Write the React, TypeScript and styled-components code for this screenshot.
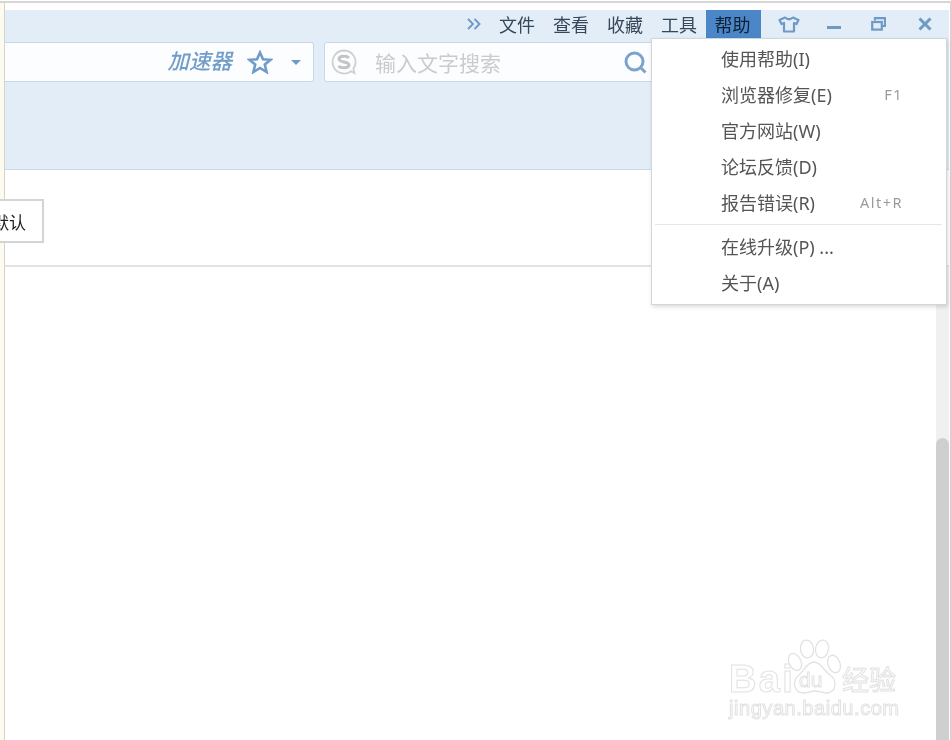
import React from "react";
import styled, { createGlobalStyle } from "styled-components";

const Global = createGlobalStyle`
  html, body { margin: 0; padding: 0; background: #fff; }
  * { box-sizing: border-box; }
  #root { width: 951px; height: 740px; overflow: hidden; }
`;

const FONT = `"Noto Sans", "Noto Sans CJK SC", sans-serif`;

const Page = styled.div`
  position: relative;
  width: 951px;
  height: 740px;
  padding-top: 1px;
  display: flex;
  flex-direction: column;
  background: #fff;
  font-family: ${FONT};
  overflow: hidden;
  filter: blur(0.5px);
`;
const TopLine = styled.div`
  height: 2px;
  flex: none;
  background: #d6d6d4;
`;
const Frame = styled.div`
  flex: 1;
  min-height: 0;
  display: flex;
`;
const LeftEdge = styled.div`
  width: 5px;
  flex: none;
  background: #fdfbf0;
  border-right: 1px solid #d4d4cc;
`;
const Window = styled.div`
  flex: 1;
  min-width: 0;
  padding-top: 7px;
  border-right: 1px solid #d4d4d4;
  padding-right: 1px;
  display: flex;
  flex-direction: column;
`;
const Header = styled.header`
  flex: none;
  height: 160px;
  background: #e3edf7;
  border-bottom: 1px solid #c9daeb;
  display: flex;
  flex-direction: column;
`;
const MenuBar = styled.nav`
  height: 28px;
  display: flex;
  justify-content: flex-end;
  align-items: stretch;
  padding-right: 17px;
`;
const MenuItem = styled.span<{ $active?: boolean }>`
  font-size: 18px;
  line-height: 30px;
  color: ${(p) => (p.$active ? "#0f2032" : "#37475a")};
  background: ${(p) => (p.$active ? "#4a86c8" : "transparent")};
  width: ${(p) => (p.$active ? "55px" : "36px")};
  margin-left: ${(p) => (p.$active ? "9px" : "18px")};
  padding-right: ${(p) => (p.$active ? "2px" : "0")};
  text-align: center;
  white-space: nowrap;
`;
const BarIcon = styled.span<{ $w: number; $ml: number }>`
  width: ${(p) => p.$w}px;
  margin-left: ${(p) => p.$ml}px;
  display: flex;
  align-items: center;
  justify-content: center;
  svg { display: block; }
`;
const ToolRow = styled.div`
  margin-top: 4px;
  height: 40px;
  display: flex;
  gap: 10px;
`;
const AddressBox = styled.div`
  width: 309px;
  border: 1px solid #c6d8ea;
  border-left: none;
  border-radius: 0 3px 3px 0;
  background: #fcfdff;
  display: flex;
  align-items: center;
  justify-content: flex-end;
  padding-right: 12px;
`;
const Speed = styled.span`
  font-size: 21.5px;
  line-height: 28px;
  margin-bottom: 2px;
  font-weight: 500;
  font-style: italic;
  color: #719dca;
  margin-right: 15px;
`;
const Caret = styled.span`
  width: 0;
  height: 0;
  border-left: 5px solid transparent;
  border-right: 5px solid transparent;
  border-top: 5px solid #6f9bc8;
  margin-left: 18px;
`;
const SearchBox = styled.div`
  width: 340px;
  border: 1px solid #c6d8ea;
  border-radius: 3px;
  background: #fcfdff;
  display: flex;
  align-items: center;
  padding-left: 6px;
`;
const Placeholder = styled.span`
  font-size: 21px;
  color: #cbcbcb;
  margin-left: 18px;
  flex: 1;
`;
const SearchIcon = styled.svg`
  margin-right: 16px;
`;
const Notice = styled.section`
  flex: none;
  height: 97px;
  border-bottom: 2px solid #e3e3e3;
  display: flex;
  align-items: flex-start;
  padding-top: 29px;
`;
const ConfirmButton = styled.button`
  flex: none;
  width: 70px;
  height: 44px;
  margin-left: -31px;
  padding: 0;
  background: #fff;
  border: 2px solid #d4d4d4;
  font-family: ${FONT};
  font-size: 17px;
  color: #222;
`;
const Content = styled.main`
  flex: 1;
  min-height: 0;
  display: flex;
  justify-content: flex-end;
`;
const Scrollbar = styled.div`
  width: 13px;
  background: #f0f0f0;
  display: flex;
  flex-direction: column;
  justify-content: flex-end;
`;
const Thumb = styled.div`
  height: 302px;
  background: #cfcfcf;
  border-radius: 7px 7px 0 0;
`;
const Dropdown = styled.div`
  position: absolute;
  left: 651px;
  top: 38px;
  width: 296px;
  height: 267px;
  background: #fff;
  border: 1px solid #cfd6dc;
  box-shadow: 1px 2px 4px rgba(0, 0, 0, 0.14);
  padding: 1px 2px 0;
`;
const Row = styled.div`
  height: 36px;
  display: flex;
  align-items: center;
  justify-content: space-between;
  padding: 0 41px 0 67px;
`;
const RowLabel = styled.span`
  font-size: 18px;
  color: #555;
  white-space: nowrap;
`;
const Shortcut = styled.span`
  font-size: 14.5px;
  letter-spacing: 1.5px;
  color: #9a9a9a;
`;
const Separator = styled.div`
  height: 1px;
  margin: 4px 2px 3px 1px;
  background: #e6e6e6;
`;
const Watermark = styled.div`
  position: absolute;
  left: 729px;
  top: 638px;
  width: 172px;
  display: flex;
  flex-direction: column;
  pointer-events: none;
`;
const WmTop = styled.div`
  display: flex;
  align-items: flex-end;
  height: 58px;
`;
const Outline = styled.span<{ $size: number }>`
  font-family: "Liberation Sans", sans-serif;
  font-size: ${(p) => p.$size}px;
  line-height: 1;
  color: #fff;
  -webkit-text-stroke: 1px #e2e2e2;
  white-space: nowrap;
`;
const Bai = styled(Outline)`
  font-weight: 700;
  letter-spacing: 2.3px;
  margin-bottom: -2px;
`;
const PawBox = styled.span`
  position: relative;
  width: 54px;
  height: 58px;
  margin-left: -8px;
  flex: none;
  svg { display: block; }
`;
const Du = styled(Outline)`
  position: absolute;
  left: 12px;
  top: 31px;
`;
const Jing = styled(Outline)`
  font-family: "Noto Sans CJK SC", sans-serif;
  margin: 0 0 4px 1px;
`;
const WmUrl = styled(Outline)`
  margin-top: 2px;
  letter-spacing: 0.55px;
`;

const Shirt = () => (
  <svg width="22" height="17" viewBox="0 0 22 17" fill="none" stroke="#6f9ac6" strokeWidth="2.2" strokeLinejoin="round">
    <path d="M7 1.5 L1.5 4 L3.5 8 L6 7 V15.5 H16 V7 L18.5 8 L20.5 4 L15 1.5 Q11 5 7 1.5 Z" />
  </svg>
);
const Minimize = () => (
  <svg width="14" height="14" viewBox="0 0 14 14"><rect x="0" y="9" width="14" height="3" fill="#6f9ac6" /></svg>
);
const Restore = () => (
  <svg width="15" height="14" viewBox="0 0 15 14" fill="none" stroke="#6f9ac6" strokeWidth="2.2">
    <path d="M4 3.5 V1.2 H14 V9 H11" />
    <rect x="1.2" y="5" width="9.6" height="7.6" />
  </svg>
);
const Close = () => (
  <svg width="14" height="14" viewBox="0 0 14 14" fill="none" stroke="#6f9ac6" strokeWidth="3">
    <path d="M1.5 1.5 L12.5 12.5 M12.5 1.5 L1.5 12.5" />
  </svg>
);
const Chevrons = () => (
  <svg width="14" height="12" viewBox="0 0 14 12" fill="none" stroke="#6f9ac6" strokeWidth="1.9">
    <path d="M1 1 L6 6 L1 11 M7.5 1 L12.5 6 L7.5 11" />
  </svg>
);
const Star = () => (
  <svg width="26" height="24" viewBox="0 0 26 24" fill="none" stroke="#6f9bc8" strokeWidth="2.6" strokeLinejoin="miter">
    <path d="M13 2.5 L16 9.2 L23.5 9.8 L17.8 14.6 L19.6 22 L13 18 L6.4 22 L8.2 14.6 L2.5 9.8 L10 9.2 Z" />
  </svg>
);
const SogouLogo = () => (
  <svg width="26" height="26" viewBox="0 0 26 26" fill="none">
    <path d="M13 1.5 A11.5 11.5 0 1 0 20 22.2 L23.5 24 L22.4 19.6 A11.5 11.5 0 0 0 13 1.5 Z" stroke="#cfcfcf" strokeWidth="1.8" />
    <path d="M18 9 C16 6.8 8.5 6.5 8 10 C7.6 13.6 18.4 12.4 18 16 C17.6 19.4 9.6 19.4 7.5 17" stroke="#c4c4c4" strokeWidth="3" />
  </svg>
);

const items: { label: string; key?: string }[][] = [
  [
    { label: "使用帮助(I)" },
    { label: "浏览器修复(E)", key: "F1" },
    { label: "官方网站(W)" },
    { label: "论坛反馈(D)" },
    { label: "报告错误(R)", key: "Alt+R" },
  ],
  [{ label: "在线升级(P) ..." }, { label: "关于(A)" }],
];

export default function App() {
  return (
    <Page>
      <Global />
      <TopLine />
      <Frame>
        <LeftEdge />
        <Window>
          <Header>
            <MenuBar>
              <BarIcon $w={14} $ml={0}><Chevrons /></BarIcon>
              <MenuItem>文件</MenuItem>
              <MenuItem>查看</MenuItem>
              <MenuItem>收藏</MenuItem>
              <MenuItem>工具</MenuItem>
              <MenuItem $active>帮助</MenuItem>
              <BarIcon $w={22} $ml={17}><Shirt /></BarIcon>
              <BarIcon $w={14} $ml={27}><Minimize /></BarIcon>
              <BarIcon $w={15} $ml={30}><Restore /></BarIcon>
              <BarIcon $w={14} $ml={32}><Close /></BarIcon>
            </MenuBar>
            <ToolRow>
              <AddressBox>
                <Speed>加速器</Speed>
                <Star />
                <Caret />
              </AddressBox>
              <SearchBox>
                <SogouLogo />
                <Placeholder>输入文字搜索</Placeholder>
                <SearchIcon width="23" height="23" viewBox="0 0 23 23" fill="none" stroke="#7ba3cc" strokeWidth="3">
                  <circle cx="10.5" cy="10.5" r="8.5" />
                  <path d="M16.5 16.5 L21.5 21.5" />
                </SearchIcon>
              </SearchBox>
            </ToolRow>
          </Header>
          <Notice>
            <ConfirmButton>默认</ConfirmButton>
          </Notice>
          <Content>
            <Scrollbar>
              <Thumb />
            </Scrollbar>
          </Content>
        </Window>
      </Frame>
      <Dropdown>
        {items.map((group, i) => (
          <React.Fragment key={i}>
            {i > 0 && <Separator />}
            {group.map((it) => (
              <Row key={it.label}>
                <RowLabel>{it.label}</RowLabel>
                {it.key && <Shortcut>{it.key}</Shortcut>}
              </Row>
            ))}
          </React.Fragment>
        ))}
      </Dropdown>
      <Watermark>
        <WmTop>
          <Bai $size={38}>Bai</Bai>
          <PawBox>
            <svg width="54" height="58" viewBox="0 0 54 58" fill="#fff" stroke="#e2e2e2" strokeWidth="1.3">
              <ellipse cx="8" cy="24" rx="6" ry="9" transform="rotate(-25 8 24)" />
              <ellipse cx="20" cy="11" rx="6.5" ry="9" transform="rotate(-8 20 11)" />
              <ellipse cx="35" cy="11" rx="6.5" ry="9" transform="rotate(10 35 11)" />
              <ellipse cx="47" cy="26" rx="6" ry="9" transform="rotate(-20 47 26)" />
              <path d="M27 24 C20 24 17 33 12 37 C5 42 6 55 17 55 C22 55 24 53 28 53 C32 53 35 55 40 55 C50 54 50 42 43 37 C37 33 34 24 27 24 Z" />
            </svg>
            <Du $size={21}>du</Du>
          </PawBox>
          <Jing $size={27}>经验</Jing>
        </WmTop>
        <WmUrl $size={20}>jingyan.baidu.com</WmUrl>
      </Watermark>
    </Page>
  );
}
